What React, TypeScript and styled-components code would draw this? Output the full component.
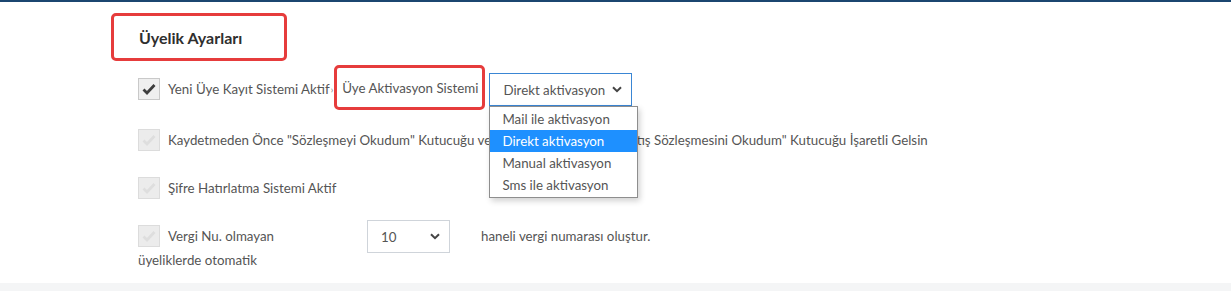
import { createGlobalStyle } from 'styled-components';
import styled from 'styled-components';

const GlobalStyle = createGlobalStyle`
  html, body {
    margin: 0;
    padding: 0;
    background: #f4f5f6;
  }
  body {
    font-family: Lato, "Open Sans", sans-serif;
    color: #555;
  }
`;

const Card = styled.div`
  background: #fff;
  border-top: 2px solid #1b4670;
  height: 283px;
  box-shadow: 0 2px 5px rgba(0, 0, 0, 0.12);
  padding: 11px 0 0 111px;
  box-sizing: border-box;
`;

const TitleBox = styled.div`
  width: 176px;
  height: 48px;
  box-sizing: border-box;
  border: 3px solid #e63c3c;
  border-radius: 5px;
  display: flex;
  align-items: center;
  padding-left: 25px;
`;

const Title = styled.h3`
  margin: 0;
  font-size: 16px;
  font-weight: 700;
  color: #2f2f2f;
`;

const Row = styled.div<{ $mt: number; $h: number }>`
  display: flex;
  align-items: center;
  margin-top: ${(p) => p.$mt}px;
  height: ${(p) => p.$h}px;
  padding-left: 27px;
  font-size: 13.3px;
  position: relative;
`;

const Box = styled.span<{ $off?: boolean }>`
  width: 20px;
  height: 20px;
  flex: none;
  border: 1px solid ${(p) => (p.$off ? '#dcdcdc' : '#c9c9c9')};
  background: ${(p) => (p.$off ? '#ececec' : '#efefef')};
  display: inline-flex;
  align-items: center;
  justify-content: center;
  margin-right: 8px;
`;

const Label = styled.span`
  color: #555;
  white-space: nowrap;
`;

const Sep = styled.span`
  font-size: 9px;
  color: #777;
  margin: 0 1px 0 1px;
`;

const HighlightBox = styled.div`
  height: 45px;
  box-sizing: border-box;
  border: 3px solid #e63c3c;
  border-radius: 5px;
  display: flex;
  align-items: center;
  padding: 0 4px 0 5px;
  margin-top: -3px;
`;

const SelectBox = styled.div<{ $w: number; $focus?: boolean }>`
  width: ${(p) => p.$w}px;
  height: 33px;
  box-sizing: border-box;
  border: 1px solid ${(p) => (p.$focus ? '#3a86d4' : '#cfd4da')};
  display: flex;
  align-items: center;
  justify-content: space-between;
  padding: 0 9px 0 13px;
  color: #555;
  font-size: 13.3px;
  background: #fff;
`;

const MenuAnchor = styled.div`
  position: relative;
  margin-left: 4px;
  margin-top: 1px;
`;

const Menu = styled.ul`
  position: absolute;
  top: 33px;
  left: 0;
  width: 149px;
  margin: 0;
  padding: 1px 0;
  list-style: none;
  background: #fff;
  border: 1px solid #8e8e8e;
  box-shadow: 2px 3px 6px rgba(0, 0, 0, 0.18);
  box-sizing: border-box;
  z-index: 5;
`;

const Item = styled.li<{ $active?: boolean }>`
  height: 22px;
  line-height: 22px;
  padding-left: 12px;
  font-size: 13.3px;
  color: ${(p) => (p.$active ? '#fff' : '#555')};
  background: ${(p) => (p.$active ? '#1e90ff' : 'transparent')};
`;

const VergiRow = styled.div`
  display: flex;
  align-items: flex-start;
  margin-top: 8px;
  padding-left: 27px;
  font-size: 13.3px;
`;

const VergiLabel = styled.div`
  width: 229px;
  display: flex;
  flex-direction: column;
  padding-top: 5px;
`;

const VergiLine = styled.div`
  display: flex;
  align-items: center;
  height: 22px;
`;

const SecondLine = styled.div`
  margin-top: 2px;
  line-height: 22px;
`;

const After = styled.span`
  margin-left: 31px;
  line-height: 33px;
  color: #555;
`;

function Check({ off }: { off?: boolean }) {
  return (
    <Box $off={off}>
      <svg width="14" height="12" viewBox="0 0 14 12">
        <path
          d="M1.5 6.5 L5 10 L12.5 2"
          fill="none"
          stroke={off ? '#dedede' : '#3d3d3d'}
          strokeWidth="2.8"
        />
      </svg>
    </Box>
  );
}

function Chevron() {
  return (
    <svg width="10" height="7" viewBox="0 0 10 7">
      <path d="M1 1.2 L5 5.2 L9 1.2" fill="none" stroke="#444" strokeWidth="2" />
    </svg>
  );
}

const options = ['Mail ile aktivasyon', 'Direkt aktivasyon', 'Manual aktivasyon', 'Sms ile aktivasyon'];

export default function App(): JSX.Element {
  return (
    <>
      <GlobalStyle />
      <Card>
        <TitleBox>
          <Title>Üyelik Ayarları</Title>
        </TitleBox>

        <Row $mt={5} $h={46}>
          <Check />
          <Label>Yeni Üye Kayıt Sistemi Aktif</Label>
          <Sep>›</Sep>
          <HighlightBox>
            <Label>Üye Aktivasyon Sistemi</Label>
          </HighlightBox>
          <MenuAnchor>
            <SelectBox $w={143} $focus>
              <span>Direkt aktivasyon</span>
              <Chevron />
            </SelectBox>
            <Menu>
              {options.map((o) => (
                <Item key={o} $active={o === 'Direkt aktivasyon'}>
                  {o}
                </Item>
              ))}
            </Menu>
          </MenuAnchor>
        </Row>

        <Row $mt={4} $h={48}>
          <Check off />
          <Label>
            Kaydetmeden Önce "Sözleşmeyi Okudum" Kutucuğu ve "Üyelik Sözleşmesi ve Satış Sözleşmesini Okudum" Kutucuğu İşaretli Gelsin
          </Label>
        </Row>

        <Row $mt={0} $h={48}>
          <Check off />
          <Label>Şifre Hatırlatma Sistemi Aktif</Label>
        </Row>

        <VergiRow>
          <VergiLabel>
            <VergiLine>
              <Check off />
              <Label>Vergi Nu. olmayan</Label>
            </VergiLine>
            <SecondLine>üyeliklerde otomatik</SecondLine>
          </VergiLabel>
          <SelectBox $w={83}>
            <span>10</span>
            <Chevron />
          </SelectBox>
          <After>haneli vergi numarası oluştur.</After>
        </VergiRow>
      </Card>
    </>
  );
}
